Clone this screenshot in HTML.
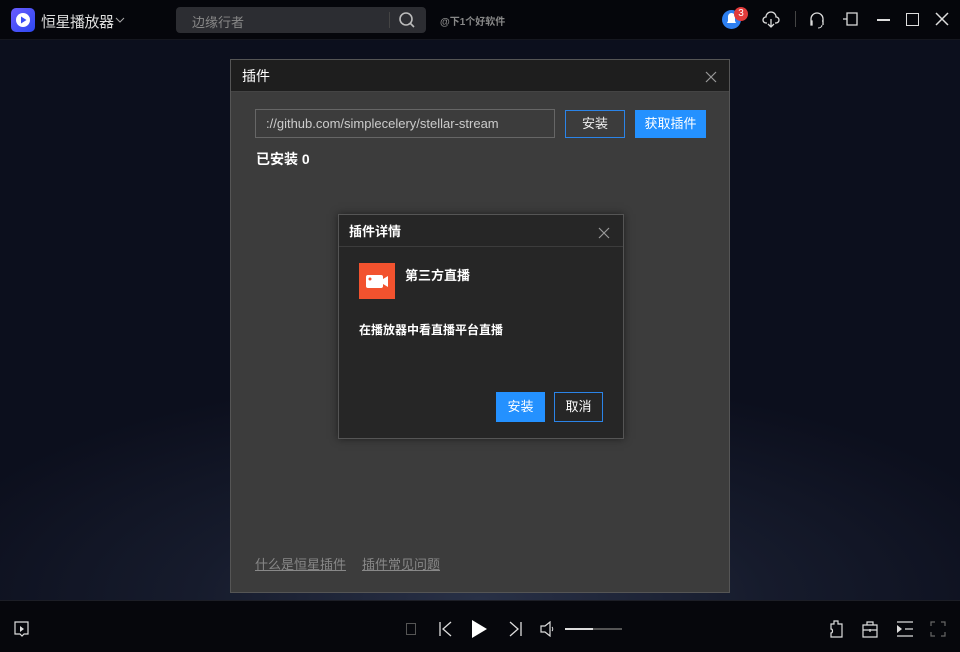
<!DOCTYPE html><html><head><meta charset="utf-8"><style>
*{margin:0;padding:0;box-sizing:border-box}
body{width:960px;height:652px;overflow:hidden;background:#0b0d18;font-family:"Liberation Sans","Noto Sans CJK SC",sans-serif;position:relative;color:#fff}
.top{position:absolute;left:0;top:0;width:960px;height:40px;background:#05060b;border-bottom:1px solid #15171f}
.main{position:absolute;left:0;top:40px;width:960px;height:560px;background:radial-gradient(ellipse 60% 40% at 50% 100%,#283046 0%,#161b2c 50%,transparent 100%),#0c0f1d}
.bot{position:absolute;left:0;top:600px;width:960px;height:52px;background:#06070c;border-top:1px solid #1c1e26}
.abs{position:absolute}
.d1{left:230px;top:59px;width:500px;height:534px;background:#3c3c3c;border:1px solid #555}
.d1h{height:32px;background:#1e1e1e;border-bottom:1px solid #444;font-size:14px;line-height:32px;padding-left:11px}
.d2{left:338px;top:214px;width:286px;height:225px;background:#262626;border:1px solid #555;box-shadow:0 0 8px rgba(0,0,0,.5)}
.btn{position:absolute;font-size:13px;text-align:center}
</style></head><body>
<div class="top">
 <div class="abs" style="left:11px;top:8px;width:24px;height:24px;border-radius:5px;background:linear-gradient(135deg,#6a5cff,#2c48f0)"><svg width="24" height="24"><circle cx="12" cy="12" r="7" fill="#fff"/><path d="M10 8.5L15.5 12L10 15.5Z" fill="#3a4ef5"/></svg></div>
 <div class="abs" style="left:41px;top:11px;font-size:15px;color:#ddd;letter-spacing:-0.5px">恒星播放器</div>
 <svg class="abs" style="left:115px;top:16px" width="10" height="8"><path d="M1 2l4 4 4-4" stroke="#aaa" fill="none"/></svg>
 <div class="abs" style="left:176px;top:7px;width:250px;height:26px;background:#2c2d32;border-radius:4px"></div>
 <div class="abs" style="left:192px;top:12px;font-size:13px;color:#888">边缘行者</div>
 <div class="abs" style="left:389px;top:12px;width:1px;height:16px;background:#444"></div>
 <svg class="abs" style="left:398px;top:11px" width="18" height="18"><circle cx="8" cy="8" r="6" stroke="#bbb" stroke-width="1.6" fill="none"/><path d="M12.5 12.5L16 16" stroke="#bbb" stroke-width="1.6"/></svg>
 <div class="abs" style="left:440px;top:13px;font-size:10px;color:#888;font-weight:bold">@下1个好软件</div>
 <div class="abs" style="left:722px;top:10px;width:19px;height:19px;border-radius:50%;background:#2d7ff0"></div>
 <svg class="abs" style="left:725px;top:12px" width="13" height="14"><path d="M6.5 1C4 1 3 3 3 5v4l-1 2h9l-1-2V5c0-2-1-4-3.5-4z M5 12h3" fill="#fff"/></svg>
 <div class="abs" style="left:734px;top:7px;width:14px;height:14px;border-radius:50%;background:#e23b3b;font-size:10px;text-align:center;line-height:14px">3</div>
 <svg class="abs" style="left:762px;top:10px" width="18" height="20"><path d="M5 13H4a3 3 0 0 1 0-6 5 5 0 0 1 10 0 3 3 0 0 1 0 6h-1M9 9v8M6 14l3 3 3-3" stroke="#ddd" stroke-width="1.3" fill="none"/></svg>
 <div class="abs" style="left:795px;top:11px;width:1px;height:16px;background:#444"></div>
 <svg class="abs" style="left:808px;top:10px" width="18" height="20"><path d="M3 13V9a6 6 0 0 1 12 0v4M3 11h1v4H3zM14 11h1v4" stroke="#ddd" stroke-width="1.3" fill="none"/><path d="M14 15c0 2-2 3-4 3" stroke="#ddd" fill="none"/></svg>
 <svg class="abs" style="left:842px;top:11px" width="16" height="16"><path d="M5 2h10v12H5zM5 8H1" stroke="#ddd" stroke-width="1.3" fill="none"/></svg>
 <div class="abs" style="left:877px;top:19px;width:13px;height:1.5px;background:#ddd"></div>
 <div class="abs" style="left:906px;top:13px;width:13px;height:13px;border:1.5px solid #ddd"></div>
 <svg class="abs" style="left:935px;top:12px" width="14" height="14"><path d="M1 1l12 12M13 1L1 13" stroke="#ddd" stroke-width="1.5"/></svg>
</div>
<div class="main"></div>
<div class="abs d1">
 <div class="d1h">插件</div>
 <svg class="abs" style="left:474px;top:11px" width="12" height="12"><path d="M1 1l10 10M11 1L1 11" stroke="#999" stroke-width="1.2"/></svg>
 <div class="abs" style="left:24px;top:49px;width:300px;height:29px;border:1px solid #666;font-size:13px;color:#ccc;line-height:27px;padding-left:10px">://github.com/simplecelery/stellar-stream</div>
 <div class="btn" style="left:334px;top:50px;width:60px;height:28px;border:1px solid #2b84e8;line-height:26px;color:#eee">安装</div>
 <div class="btn" style="left:404px;top:50px;width:71px;height:28px;background:#2491ff;line-height:28px">获取插件</div>
 <div class="abs" style="left:25px;top:89px;font-size:14px;font-weight:bold">已安装 0</div>
 <div class="abs" style="left:24px;top:494px;font-size:13px;color:#888;text-decoration:underline">什么是恒星插件</div>
 <div class="abs" style="left:131px;top:494px;font-size:13px;color:#888;text-decoration:underline">插件常见问题</div>
</div>
<div class="abs d2">
 <div style="height:32px;border-bottom:1px solid #3c3c3c;font-size:13px;line-height:34px;padding-left:10px;font-weight:bold">插件详情</div>
 <svg class="abs" style="left:259px;top:12px" width="12" height="12"><path d="M1 1l10 10M11 1L1 11" stroke="#999" stroke-width="1.2"/></svg>
 <div class="abs" style="left:20px;top:48px;width:36px;height:36px;background:#f2522e"><svg width="36" height="36"><rect x="7" y="12" width="17" height="13" rx="2" fill="#fff"/><path d="M24 16l5-3v11l-5-3z" fill="#fff"/><circle cx="11" cy="16" r="1.5" fill="#f2522e"/></svg></div>
 <div class="abs" style="left:66px;top:50px;font-size:13px;font-weight:bold">第三方直播</div>
 <div class="abs" style="left:20px;top:106px;font-size:12px;font-weight:bold">在播放器中看直播平台直播</div>
 <div class="btn" style="left:157px;top:177px;width:49px;height:30px;background:#2491ff;line-height:30px">安装</div>
 <div class="btn" style="left:215px;top:177px;width:49px;height:30px;border:1px solid #2b84e8;line-height:28px">取消</div>
</div>
<div class="bot">
 <svg class="abs" style="left:14px;top:20px" width="16" height="18"><path d="M1 1h13v12h-4l-2 2-2-2H1z" stroke="#ddd" stroke-width="1.2" fill="none"/><path d="M6 5l4 3-4 3z" fill="#ddd"/></svg>
 <div class="abs" style="left:406px;top:22px;width:10px;height:12px;border:1px solid #555"></div>
 <svg class="abs" style="left:438px;top:20px" width="16" height="16"><path d="M2 1v14M13 1L5 8l8 7" stroke="#ddd" stroke-width="1.3" fill="none"/></svg>
 <svg class="abs" style="left:470px;top:18px" width="18" height="20"><path d="M2 1l15 9-15 9z" fill="#fff"/></svg>
 <svg class="abs" style="left:507px;top:20px" width="16" height="16"><path d="M14 1v14M3 1l8 7-8 7" stroke="#ddd" stroke-width="1.3" fill="none"/></svg>
 <svg class="abs" style="left:540px;top:20px" width="16" height="16"><path d="M1 5h4l5-4v14l-5-4H1z" stroke="#ddd" stroke-width="1.2" fill="none"/><path d="M12 6c1 1 1 3 0 4" stroke="#ddd" fill="none"/></svg>
 <div class="abs" style="left:565px;top:27px;width:57px;height:2px;background:#555"></div>
 <div class="abs" style="left:565px;top:27px;width:28px;height:2px;background:#ddd"></div>
 <svg class="abs" style="left:828px;top:19px" width="16" height="18"><path d="M6 1h4v3h4v13H3v-4c2 0 2-4 0-4V4h3z" stroke="#ddd" stroke-width="1.2" fill="none"/></svg>
 <svg class="abs" style="left:862px;top:19px" width="16" height="18"><path d="M1 5h14v12H1zM5 5V2h6v3M1 10h14M8 9v3" stroke="#ddd" stroke-width="1.2" fill="none"/></svg>
 <svg class="abs" style="left:896px;top:20px" width="18" height="16"><path d="M1 1h16M9 8h8M1 15h16" stroke="#ddd" stroke-width="1.2"/><path d="M1 4l5 4-5 4z" fill="#ddd"/></svg>
 <svg class="abs" style="left:930px;top:20px" width="16" height="16"><path d="M1 5V1h4M11 1h4v4M15 11v4h-4M5 15H1v-4" stroke="#666" stroke-width="1.2" fill="none"/></svg>
</div>
</body></html>
